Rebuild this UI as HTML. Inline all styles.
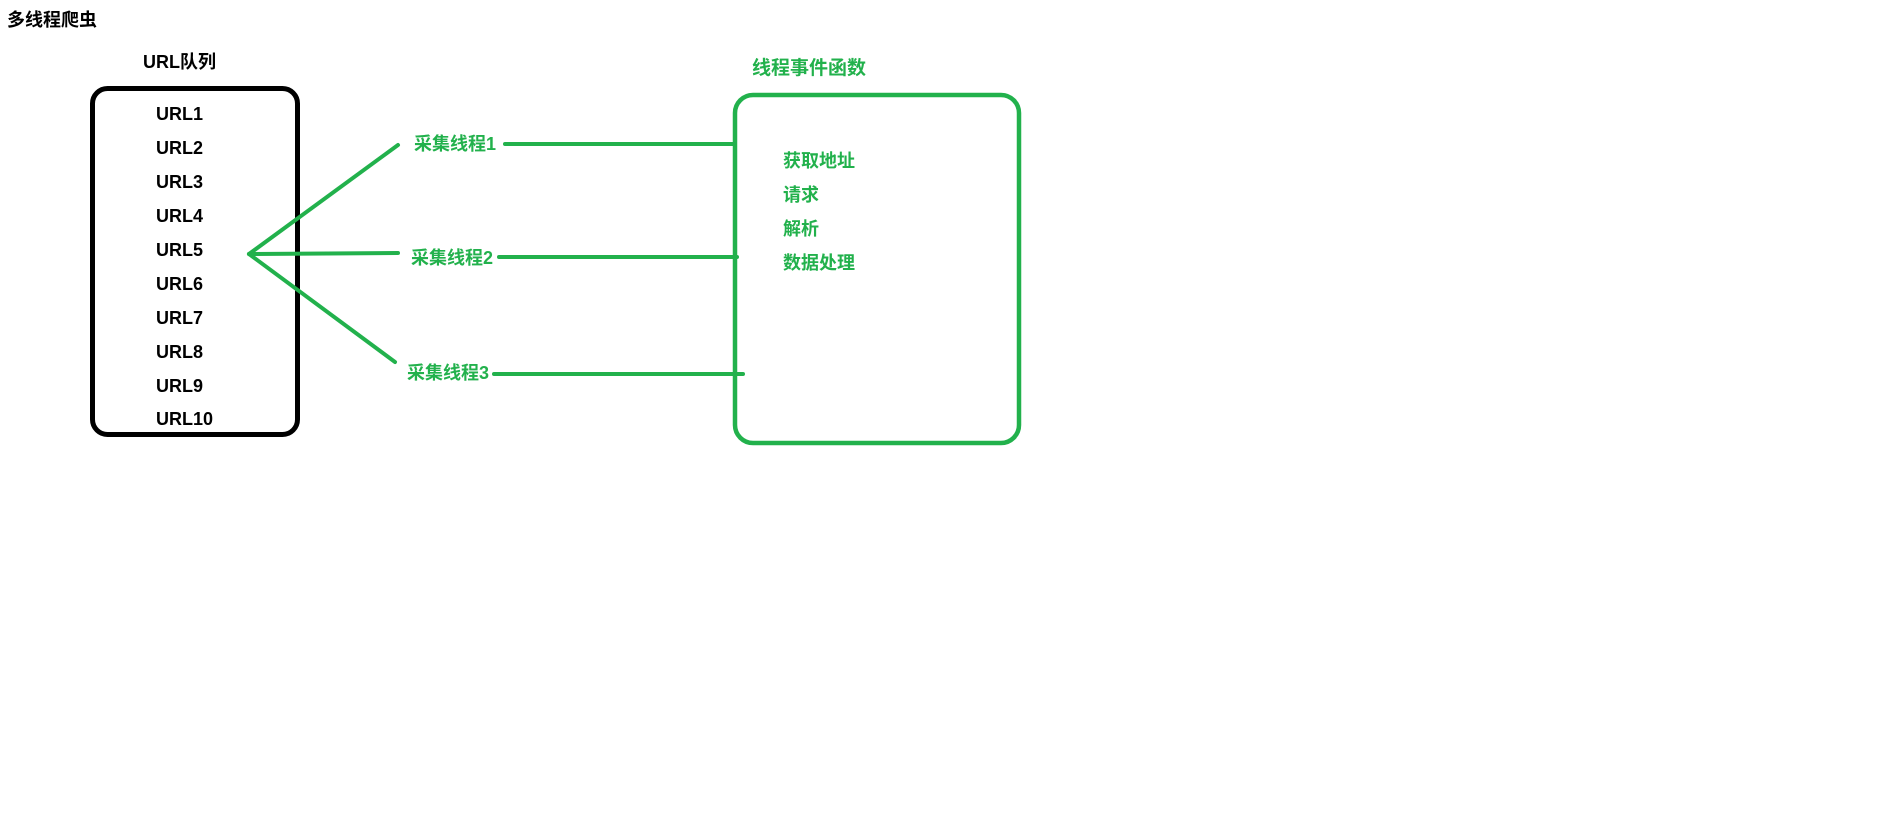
<!DOCTYPE html>
<html><head><meta charset="utf-8"><style>
html,body{margin:0;padding:0;width:1889px;height:833px;background:#fff;overflow:hidden;position:relative}
.t{position:absolute;font-family:"Liberation Sans","Noto Sans CJK SC",sans-serif;font-weight:bold;font-size:18px;line-height:22px;white-space:nowrap}
.k{color:#000}.g{color:#22b14c}
</style></head><body>
<svg width="1889" height="833" style="position:absolute;left:0;top:0">
<rect x="92.5" y="88.5" width="205" height="346" rx="15" fill="none" stroke="#000" stroke-width="5"/>
<rect x="735" y="95" width="284" height="348" rx="18" fill="none" stroke="#22b14c" stroke-width="4.5"/>
<g stroke="#22b14c" stroke-width="4" stroke-linecap="round">
<line x1="249" y1="254" x2="398" y2="145"/>
<line x1="249" y1="254" x2="398" y2="253"/>
<line x1="249" y1="254" x2="395" y2="362"/>
<line x1="505" y1="144" x2="735" y2="144"/>
<line x1="499" y1="257" x2="737" y2="257"/>
<line x1="494" y1="374" x2="743" y2="374"/>
</g>
</svg>
<div class="t k" style="left:7px;top:9px">多线程爬虫</div>
<div class="t k" style="left:143px;top:51px">URL队列</div>
<div class="t k" style="left:156px;top:103px">URL1</div>
<div class="t k" style="left:156px;top:137px">URL2</div>
<div class="t k" style="left:156px;top:171px">URL3</div>
<div class="t k" style="left:156px;top:205px">URL4</div>
<div class="t k" style="left:156px;top:239px">URL5</div>
<div class="t k" style="left:156px;top:273px">URL6</div>
<div class="t k" style="left:156px;top:307px">URL7</div>
<div class="t k" style="left:156px;top:341px">URL8</div>
<div class="t k" style="left:156px;top:375px">URL9</div>
<div class="t k" style="left:156px;top:408px">URL10</div>
<div class="t g" style="left:752px;top:58px;font-size:19px">线程事件函数</div>
<div class="t g" style="left:414px;top:133px">采集线程1</div>
<div class="t g" style="left:411px;top:247px">采集线程2</div>
<div class="t g" style="left:407px;top:362px">采集线程3</div>
<div class="t g" style="left:783px;top:150px">获取地址</div>
<div class="t g" style="left:783px;top:184px">请求</div>
<div class="t g" style="left:783px;top:218px">解析</div>
<div class="t g" style="left:783px;top:252px">数据处理</div>
</body></html>
